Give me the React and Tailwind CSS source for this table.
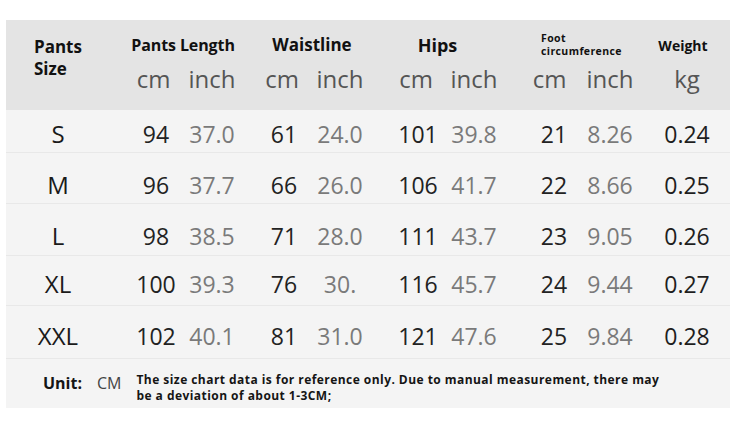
import React from "react";

const rows = [
  { h: "h-[42px]", pt: "pt-[6px]", d: ["S", "94", "37.0", "61", "24.0", "101", "39.8", "21", "8.26", "0.24"] },
  { h: "h-[51px]", pt: "pt-[14px]", d: ["M", "96", "37.7", "66", "26.0", "106", "41.7", "22", "8.66", "0.25"] },
  { h: "h-[52px]", pt: "pt-[12px]", d: ["L", "98", "38.5", "71", "28.0", "111", "43.7", "23", "9.05", "0.26"] },
  { h: "h-[50px]", pt: "pt-[6px]", d: ["XL", "100", "39.3", "76", "30.", "116", "45.7", "24", "9.44", "0.27"] },
  { h: "h-[53px]", pt: "pt-[7px]", d: ["XXL", "102", "40.1", "81", "31.0", "121", "47.6", "25", "9.84", "0.28"] },
];

function Cell({ w, ml, color, children }) {
  return (
    <div className={`${w} ${ml} ${color} text-center shrink-0`}>{children}</div>
  );
}

function DataRow({ r, first }) {
  const d = r.d;
  const cm = "text-[#222222]";
  const inch = "text-[#7a7a7a]";
  return (
    <div
      className={`flex items-center ${r.h} ${r.pt} ${first ? "" : "border-t border-[#e8e8e8]"} text-[23px] leading-[30px]`}
    >
      <Cell w="w-[104px]" ml="" color="text-[#1a1a1a] text-[24px]">{d[0]}</Cell>
      <Cell w="w-[56px]" ml="ml-[18px]" color={cm}>{d[1]}</Cell>
      <Cell w="w-[56px]" ml="" color={inch}>{d[2]}</Cell>
      <Cell w="w-[56px]" ml="ml-[16px]" color={cm}>{d[3]}</Cell>
      <Cell w="w-[56px]" ml="" color={inch}>{d[4]}</Cell>
      <Cell w="w-[56px]" ml="ml-[22px]" color={cm}>{d[5]}</Cell>
      <Cell w="w-[56px]" ml="" color={inch}>{d[6]}</Cell>
      <Cell w="w-[56px]" ml="ml-[24px]" color={cm}>{d[7]}</Cell>
      <Cell w="w-[56px]" ml="" color={inch}>{d[8]}</Cell>
      <Cell w="w-[92px]" ml="pl-[6px]" color="text-[#1e1e1e]">{d[9]}</Cell>
    </div>
  );
}

function Units({ cmShift = "" }) {
  return (
    <div className="flex h-[28px] mt-[10px] text-[24px] leading-[28px] text-[#555555]">
      <div className={`w-[56px] text-center ${cmShift}`}>cm</div>
      <div className="w-[56px] text-center">inch</div>
    </div>
  );
}

export default function App() {
  return (
    <div className="w-[755px] h-[427px] bg-white pt-[20px] pl-[6px] font-['Open_Sans',sans-serif]">
      <div className="w-[724px] bg-[#f4f4f4]">
        {/* Header */}
        <div className="flex h-[90px] bg-[#e4e4e4] text-[#111111]">
          <div className="w-[104px] shrink-0 pl-[28px] pt-[16px] text-[17px] leading-[22px] font-bold">
            Pants
            <br />
            Size
          </div>
          <div className="ml-[18px] w-[112px] shrink-0 pt-[15px]">
            <div className="h-[20px] flex items-center justify-center pr-[2px] text-[16px] font-bold tracking-[-0.1px]">
              Pants Length
            </div>
            <Units cmShift="pr-[5px]" />
          </div>
          <div className="ml-[16px] w-[112px] shrink-0 pt-[15px]">
            <div className="h-[20px] flex items-center justify-center text-[17px] font-bold">
              Waistline
            </div>
            <Units cmShift="pr-[4px]" />
          </div>
          <div className="ml-[22px] w-[112px] shrink-0 pt-[15px]">
            <div className="h-[20px] flex items-center justify-center pr-[17px] text-[18px] font-bold">
              Hips
            </div>
            <Units cmShift="pr-[4px]" />
          </div>
          <div className="ml-[24px] w-[112px] shrink-0 pt-[15px]">
            <div className="h-[20px] flex items-center pl-[15px]">
              <div className="text-[10.5px] leading-[13px] font-bold tracking-[0.4px]">
                Foot
                <br />
                circumference
              </div>
            </div>
            <Units cmShift="pr-[9px]" />
          </div>
          <div className="w-[92px] shrink-0 pt-[15px]">
            <div className="h-[20px] flex items-center justify-center pr-[2px] text-[14px] font-bold">
              Weight
            </div>
            <div className="h-[28px] mt-[10px] text-[24px] leading-[28px] text-[#555555] text-center pl-[6px]">
              kg
            </div>
          </div>
        </div>

        {/* Body */}
        {rows.map((r, i) => (
          <DataRow key={i} r={r} first={i === 0} />
        ))}

        {/* Footer */}
        <div className="flex items-start h-[50px] border-t border-[#e8e8e8] pt-[13px]">
          <div className="ml-[37px] text-[16px] leading-[22px] font-bold text-[#151515]">Unit:</div>
          <div className="ml-[15px] text-[16px] leading-[22px] text-[#444444]">CM</div>
          <div className="ml-[15px] text-[12px] leading-[16px] font-bold text-[#151515] tracking-[0.45px] whitespace-nowrap">
            The size chart data is for reference only. Due to manual measurement, there may
            <br />
            be a deviation of about 1-3CM;
          </div>
        </div>
      </div>
    </div>
  );
}
